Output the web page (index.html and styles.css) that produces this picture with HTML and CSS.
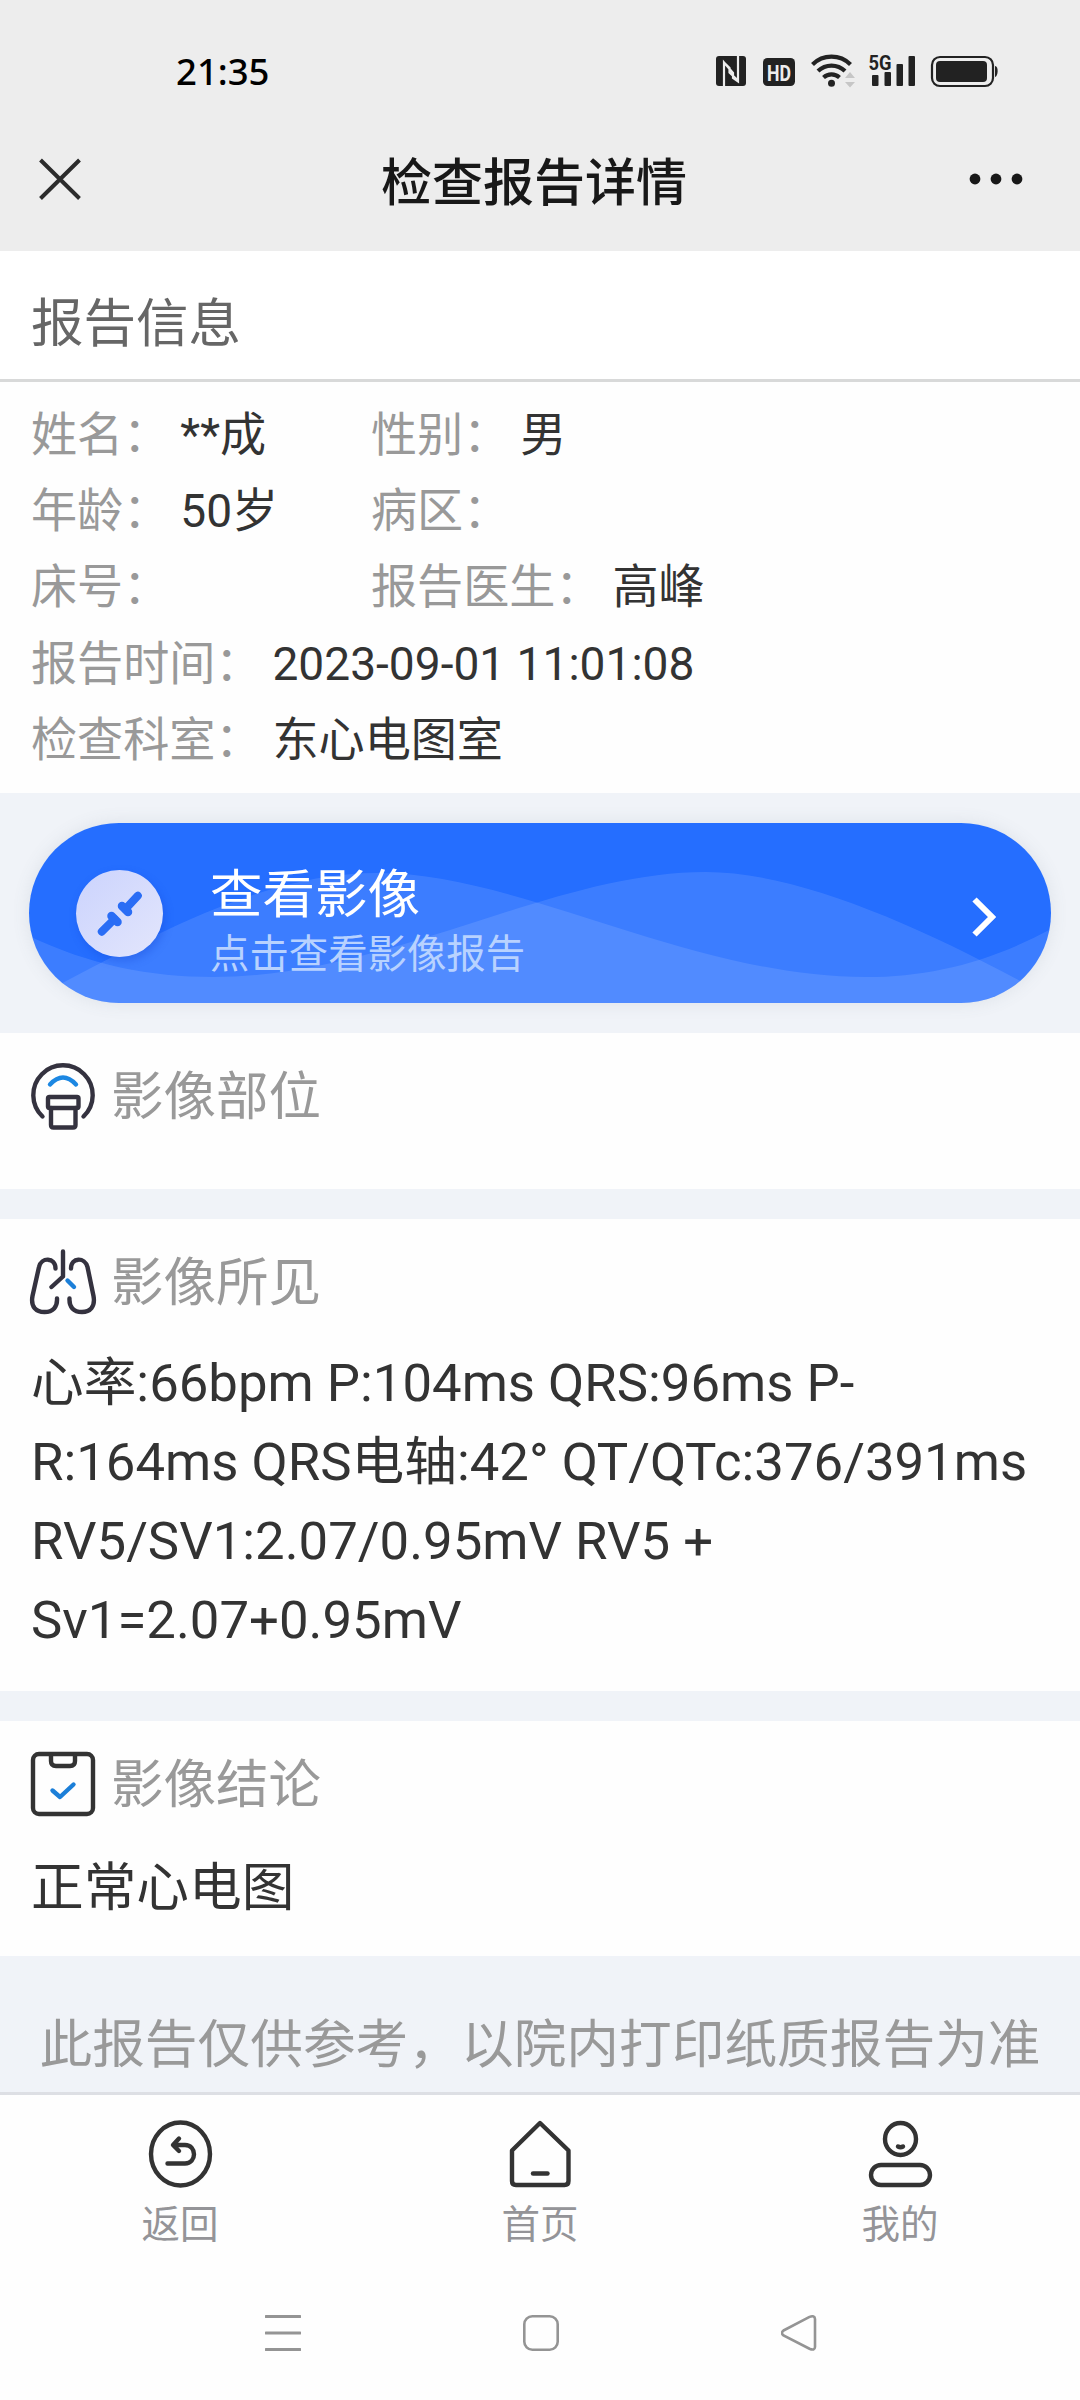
FILE: index.html
```html
<!DOCTYPE html>
<html lang="zh-CN">
<head>
<meta charset="utf-8">
<title>检查报告详情</title>
<link rel="stylesheet" href="styles.css">
</head>
<body>
<div class="screen">
  <header class="top">
    <div class="status">
      <span class="clock">21:35</span>
      <svg class="status-icons" width="284" height="40" viewBox="715 50 284 40">
        <rect x="716" y="56" width="30" height="30" rx="3" fill="#222"/>
        <path d="M724 86V62.500L733 73V78L738 81.500V56M738 80.500L729.500 72.500V68L724 62.500" fill="none" stroke="#ededed" stroke-width="2.200"/>
        <rect x="763" y="58" width="32" height="28" rx="4.500" fill="#222"/>
        <text x="779" y="80.500" class="hd" text-anchor="middle" textLength="24" lengthAdjust="spacingAndGlyphs">HD</text>
        <g fill="none" stroke="#222" stroke-width="4.200">
          <path d="M812.500 64.500a27 27 0 0 1 38 0"/>
          <path d="M818 71a19.500 19.500 0 0 1 27 0"/>
          <path d="M823.500 77.500a12 12 0 0 1 16 0"/>
        </g>
        <circle cx="831.500" cy="83.300" r="3.500" fill="#222"/>
        <path d="M845 78l5-6 5 6zM845 82h10l-5 5.500z" fill="#c6c6c6"/>
        <text x="868.500" y="69.500" class="net" textLength="23" lengthAdjust="spacingAndGlyphs">5G</text>
        <g fill="#222">
          <rect x="872" y="75" width="6.500" height="11" rx="1"/>
          <rect x="884.500" y="72" width="6.500" height="14" rx="1"/>
          <rect x="896.500" y="64" width="6.500" height="22" rx="1"/>
          <rect x="908.500" y="56" width="6.500" height="30" rx="1"/>
          <rect x="936" y="61" width="51" height="21" rx="4"/>
          <path d="M995 66c4 0 3 11 0 11z"/>
        </g>
        <rect x="932" y="57" width="61" height="29" rx="8" fill="none" stroke="#222" stroke-width="2.200"/>
      </svg>
    </div>
    <div class="nav">
      <svg width="44" height="44" viewBox="38 157 44 44"><path d="M40.500 160l39 38.500M79.500 160l-39 38.500" stroke="#2c2c2c" stroke-width="4" fill="none"/></svg>
      <h1 class="nav-title">检查报告详情</h1>
      <svg width="54" height="12" viewBox="0 0 54 12" fill="#181818"><circle cx="6" cy="6" r="5.400"/><circle cx="27" cy="6" r="5.400"/><circle cx="48" cy="6" r="5.400"/></svg>
    </div>
  </header>

  <h2 class="info-title">报告信息</h2>
  <section class="info">
    <div class="row"><div class="cell"><span class="label">姓名：</span><span>**成</span></div><div class="cell"><span class="label">性别：</span><span>男</span></div></div>
    <div class="row"><div class="cell"><span class="label">年龄：</span><span>50岁</span></div><div class="cell"><span class="label">病区：</span></div></div>
    <div class="row"><div class="cell"><span class="label">床号：</span></div><div class="cell"><span class="label">报告医生：</span><span>高峰</span></div></div>
    <div class="row"><div class="cell"><span class="label">报告时间：</span><span>2023-09-01 11:01:08</span></div></div>
    <div class="row"><div class="cell"><span class="label">检查科室：</span><span>东心电图室</span></div></div>
  </section>

  <div class="view-wrap">
    <a class="view">
      <svg class="waves" width="1022" height="180" viewBox="29 823 1022 180">
        <path d="M29 936C90 965 150 977 213 977C390 977 550 872 706 872C800 872 930 930 1051 998V1003H29z" fill="#fff" fill-opacity=".11"/>
        <path d="M29 1001C170 925 270 873 378 873C520 873 690 977 866 977C930 977 990 962 1051 929V1003H29z" fill="#fff" fill-opacity=".11"/>
      </svg>
      <span class="badge">
        <svg width="87" height="87" viewBox="76.500 869 87 87" fill="#2a6df5" stroke="#2a6df5" stroke-linecap="round">
          <path d="M102.300 930.700L115 918M138.300 894.800L126 908" stroke-width="8"/>
          <path d="M112 915L118 921M122.500 905L128.500 911" stroke-width="8.500"/>
        </svg>
      </span>
      <span class="view-text"><span class="view-title">查看影像</span><span class="view-sub">点击查看影像报告</span></span>
      <svg class="chevron" width="24" height="42" viewBox="972 896 24 42"><path d="M974.500 899.500L992 917L974.500 934.500" fill="none" stroke="#fff" stroke-width="6"/></svg>
    </a>
  </div>

  <section class="card part">
    <h3 class="heading">
      <svg width="68" height="68" viewBox="29 1062 68 68" fill="none" stroke="#34323f" stroke-width="4.400" stroke-linecap="round" stroke-linejoin="round">
        <path d="M42.500 1116.500A29.700 29.700 0 1 1 83.500 1116.500"/>
        <rect x="48" y="1097" width="30.500" height="11" rx="1.500"/>
        <path d="M51 1108v17q0 2.500 2.500 2.500h19.500q2.500 0 2.500-2.500v-17"/>
        <path d="M50 1084.500Q63 1070.500 76 1084.500" stroke="#1c87e2"/>
      </svg>
      <span>影像部位</span>
    </h3>
  </section>

  <section class="card">
    <h3 class="heading">
      <svg width="68" height="68" viewBox="29 1248 68 68" fill="none" stroke="#34323f" stroke-width="4.400" stroke-linecap="round" stroke-linejoin="round">
        <path d="M63 1251.500V1276.500L51.500 1287"/>
        <path d="M55.500 1268.500C55.500 1257 41 1257 39 1267L32.500 1296C30.500 1307 36 1312 44.500 1312C53 1312 57.500 1307 57 1298.500"/>
        <path d="M71 1268.500C71 1257 85 1257 87.500 1267L93.500 1296C95.500 1307 90 1312 82 1312C73.500 1312 69 1307 69.500 1298.500"/>
        <path d="M67.500 1280.500L74 1287" stroke="#1c7fd8"/>
      </svg>
      <span>影像所见</span>
    </h3>
    <p class="body-text">心率:66bpm P:104ms QRS:96ms P-<br>R:164ms QRS电轴:42° QT/QTc:376/391ms RV5/SV1:2.07/0.95mV RV5 + Sv1=2.07+0.95mV</p>
  </section>

  <section class="card last">
    <h3 class="heading">
      <svg width="68" height="68" viewBox="29 1751 68 68" fill="none" stroke="#333" stroke-width="4.400" stroke-linecap="round" stroke-linejoin="round">
        <rect x="33" y="1755" width="60" height="60" rx="6"/>
        <path d="M51 1756v6q0 5 5 5h14q5 0 5-5v-6"/>
        <path d="M52.500 1791.500L60 1798L73.500 1785.500" stroke="#1c7fd8"/>
      </svg>
      <span>影像结论</span>
    </h3>
    <p class="body-text">正常心电图</p>
  </section>

  <p class="notice">此报告仅供参考，以院内打印纸质报告为准</p>

  <nav class="tabs">
    <a class="tab">
      <svg width="68" height="68" viewBox="146 2120 68 68" fill="none" stroke="#333" stroke-width="4.400" stroke-linecap="round" stroke-linejoin="round">
        <ellipse cx="180.500" cy="2154" rx="29.500" ry="31.500"/>
        <path d="M167.500 2163.500H185C197 2163.500 197 2145 185 2145H174M179 2138.500L173 2145L179 2151"/>
      </svg>
      <span>返回</span>
    </a>
    <a class="tab">
      <svg width="68" height="68" viewBox="506 2120 68 68" fill="none" stroke="#333" stroke-width="4.400" stroke-linecap="round" stroke-linejoin="round">
        <path d="M540 2123L568.500 2150.500V2181Q568.500 2185 564.500 2185H516Q512 2185 512 2181V2150.500z"/>
        <path d="M533 2173.500h14.500"/>
      </svg>
      <span>首页</span>
    </a>
    <a class="tab">
      <svg width="68" height="68" viewBox="866 2120 68 68" fill="none" stroke="#333" stroke-width="4.400" stroke-linecap="round" stroke-linejoin="round">
        <ellipse cx="900.500" cy="2139" rx="15.500" ry="16"/>
        <path d="M898 2146.500q2.500 1.500 5 0"/>
        <rect x="871" y="2165" width="59" height="20" rx="10"/>
      </svg>
      <span>我的</span>
    </a>
  </nav>

  <div class="system">
    <svg width="36" height="36" viewBox="0 0 36 36" stroke="#949494" stroke-width="3" stroke-linecap="round"><path d="M1 1.500h34M1 18h34M1 34.500h34"/></svg>
    <svg width="36" height="36" viewBox="0 0 36 36" fill="none" stroke="#949494" stroke-width="2.600"><rect x="1.300" y="1.300" width="33.400" height="33.400" rx="8"/></svg>
    <svg width="36" height="36" viewBox="0 0 36 36" fill="none" stroke="#949494" stroke-width="2.600"><path d="M2.500 15.500L28.500 1.900Q33.800 0 34 4V32Q33.800 36 28.500 33.700L2.500 20.500Q-.5 18 2.500 15.500z"/></svg>
  </div>
</div>
</body>
</html>
```

FILE: styles.css
```css
* { box-sizing: border-box; }
body, h1, h2, h3, p { margin: 0; font-weight: 400; }
body {
  background: #fefefe;
  font-family: Roboto, "Noto Sans CJK SC", sans-serif;
  color: #333;
}
svg { display: block; flex: none; }

.screen { width: 1080px; height: 2400px; display: flex; flex-direction: column; overflow: hidden; background: #f0f3f8; }

.top { height: 251px; flex: none; background: #ededed; }
.status { height: 107px; padding: 33px 81px 0 176px; display: flex; justify-content: space-between; align-items: flex-start; }
.clock { font: 500 36.500px/76px "Noto Sans", sans-serif; color: #000; }
.status-icons { margin-top: 17px; }
.hd { font: 700 22px Roboto, sans-serif; fill: #ededed; }
.net { font: 700 21px Roboto, sans-serif; fill: #222; }
.nav { height: 144px; padding: 0 57px 0 38px; display: flex; align-items: center; }
.nav-title { flex: 1; padding: 9px 0 0 299px; font-size: 51px; line-height: 60px; font-weight: 500; color: #181818; }

.info-title { height: 131px; flex: none; padding-left: 31px; background: #fff; border-bottom: 3px solid #d8d9d9; font-size: 52.500px; line-height: 146px; color: #666; }
.info { height: 411px; flex: none; padding: 15px 31px 0; background: #fefefe; font-size: 46.100px; line-height: 76.200px; }
.row { display: flex; height: 76.200px; }
.cell { display: flex; min-width: 340px; white-space: nowrap; }
.label { color: #999; margin-right: 11px; }

.view-wrap { height: 240px; flex: none; padding: 30px 29px; }
.view { position: relative; display: flex; align-items: center; height: 180px; padding: 0 55px 0 47px; border-radius: 90px; overflow: hidden; background: #256eff; box-shadow: 0 0 18px rgba(90, 110, 120, .12); }
.waves { position: absolute; inset: 0; }
.badge, .view-text, .chevron { position: relative; }
.badge { width: 87px; height: 87px; border-radius: 50%; background: linear-gradient(135deg, #cbd3fd, #e3e6fc); box-shadow: 2px 4px 8px rgba(20, 70, 210, .35); }
.view-text { margin: 17px 0 0 47px; display: flex; flex-direction: column; flex: 1; }
.view-title { font-size: 52.500px; line-height: 66px; color: #fff; }
.view-sub { font-size: 39.400px; line-height: 54px; color: #b8d2ff; }
.chevron { margin-top: 8px; }

.card { flex: none; background: #fefefe; padding: 29px 31px 31px; margin-bottom: 30px; }
.part { height: 156px; padding-bottom: 0; }
.last { margin-bottom: 0; }
.heading { display: flex; align-items: center; height: 68px; margin-left: -2px; gap: 14px; font-size: 52.500px; line-height: 68px; color: #999; }
.heading span { white-space: nowrap; padding-top: 2px; }
.body-text { margin-top: 28px; font-size: 52.700px; line-height: 79px; color: #333; }
.last .body-text { padding-top: 3px; margin-bottom: -3px; }

.notice { height: 139px; flex: none; padding-top: 21px; border-bottom: 3px solid #dddfe4; font-size: 52.700px; line-height: 136px; color: #999; text-align: center; white-space: nowrap; }
.tabs { height: 172px; flex: none; padding-top: 25px; display: grid; grid-template-columns: repeat(3, 1fr); background: #fefefe; }
.tab { display: flex; flex-direction: column; align-items: center; font-size: 38.500px; line-height: 56px; color: #949498; }
.tab span { margin-top: 9px; }
.system { flex: 1; background: #fefefe; padding: 48px 263px 0 265px; display: flex; justify-content: space-between; align-items: flex-start; }
```
